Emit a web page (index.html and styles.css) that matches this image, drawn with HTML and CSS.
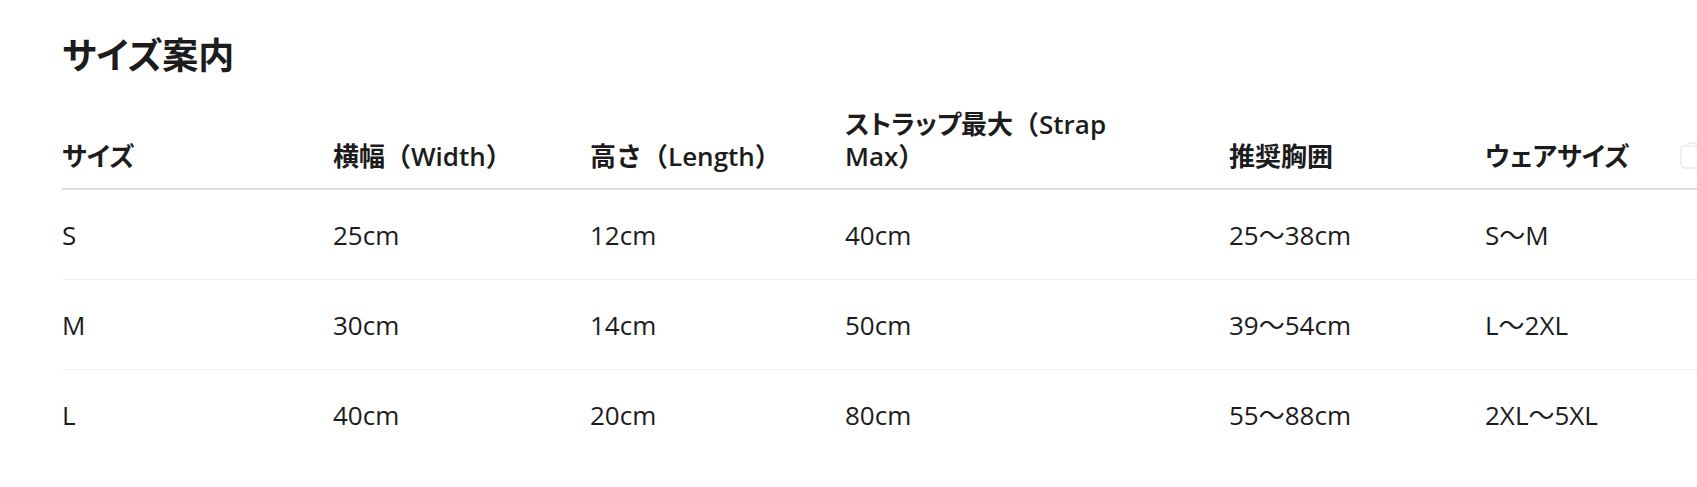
FILE: index.html
```html
<!DOCTYPE html>
<html lang="ja">
<head>
<meta charset="utf-8">
<title>サイズ案内</title>
<link rel="stylesheet" href="styles.css">
</head>
<body>
<div class="page">
  <h2 class="title"><span class="kana">サイズ案内</span></h2>
  <div class="table-wrap">
    <table class="size-table">
      <colgroup>
        <col class="c1"><col class="c2"><col class="c3"><col class="c4"><col class="c5"><col class="c6">
      </colgroup>
      <thead>
        <tr>
          <th><span class="kana">サイズ</span></th>
          <th>横幅（Width）</th>
          <th>高さ（Length）</th>
          <th><span class="wrap"><span class="kana">ストラップ最大</span>（Strap Max）</span></th>
          <th>推奨胸囲</th>
          <th><span class="kana">ウェアサイズ</span></th>
        </tr>
      </thead>
      <tbody>
        <tr><td>S</td><td>25cm</td><td>12cm</td><td>40cm</td><td>25〜38cm</td><td>S〜M</td></tr>
        <tr><td>M</td><td>30cm</td><td>14cm</td><td>50cm</td><td>39〜54cm</td><td>L〜2XL</td></tr>
        <tr><td>L</td><td>40cm</td><td>20cm</td><td>80cm</td><td>55〜88cm</td><td>2XL〜5XL</td></tr>
      </tbody>
    </table>
  </div>
  <span class="copy-btn" aria-hidden="true">
    <svg width="24" height="28" viewBox="0 0 24 28" fill="none" stroke="#ececec" stroke-width="1.5">
      <rect x="1" y="4" width="22" height="22" rx="4"/>
      <path d="M8 4 V2.5 Q8 1 9.5 1 H14.5 Q16 1 16 2.5 V4"/>
    </svg>
  </span>
</div>
</body>
</html>
```

FILE: styles.css
```css
html, body {
  margin: 0;
  padding: 0;
  background: #ffffff;
  overflow: hidden;
}

body {
  font-family: "Open Sans", "Noto Sans CJK JP", sans-serif;
  color: #1c1c1c;
}

.page {
  position: relative;
  padding: 30px 0 0 62px;
}

.kana {
  font-feature-settings: "palt";
}

.title {
  margin: 0 0 15px;
  font-family: "Noto Sans CJK JP", sans-serif;
  font-size: 36px;
  line-height: 47px;
  font-weight: 700;
}

.table-wrap {
  overflow: hidden;
}

.size-table {
  border-collapse: collapse;
  table-layout: fixed;
  width: 1679px;
}

.c1 { width: 271px; }
.c2 { width: 257px; }
.c3 { width: 255px; }
.c4 { width: 384px; }
.c5 { width: 256px; }
.c6 { width: 256px; }

.size-table th {
  text-align: left;
  vertical-align: bottom;
  font-size: 26px;
  line-height: 32px;
  font-weight: 600;
  padding: 16px 0;
  border-bottom: 2px solid #dcdcdc;
}

.wrap {
  display: block;
  max-width: 270px;
}

.size-table td {
  font-size: 26px;
  line-height: 32px;
  padding: 29px 0 28px;
  vertical-align: middle;
  border-bottom: 1px solid #efefef;
}

.size-table tbody tr:last-child td {
  border-bottom: none;
}

.copy-btn {
  position: absolute;
  left: 1680px;
  top: 142px;
  display: block;
}
```
